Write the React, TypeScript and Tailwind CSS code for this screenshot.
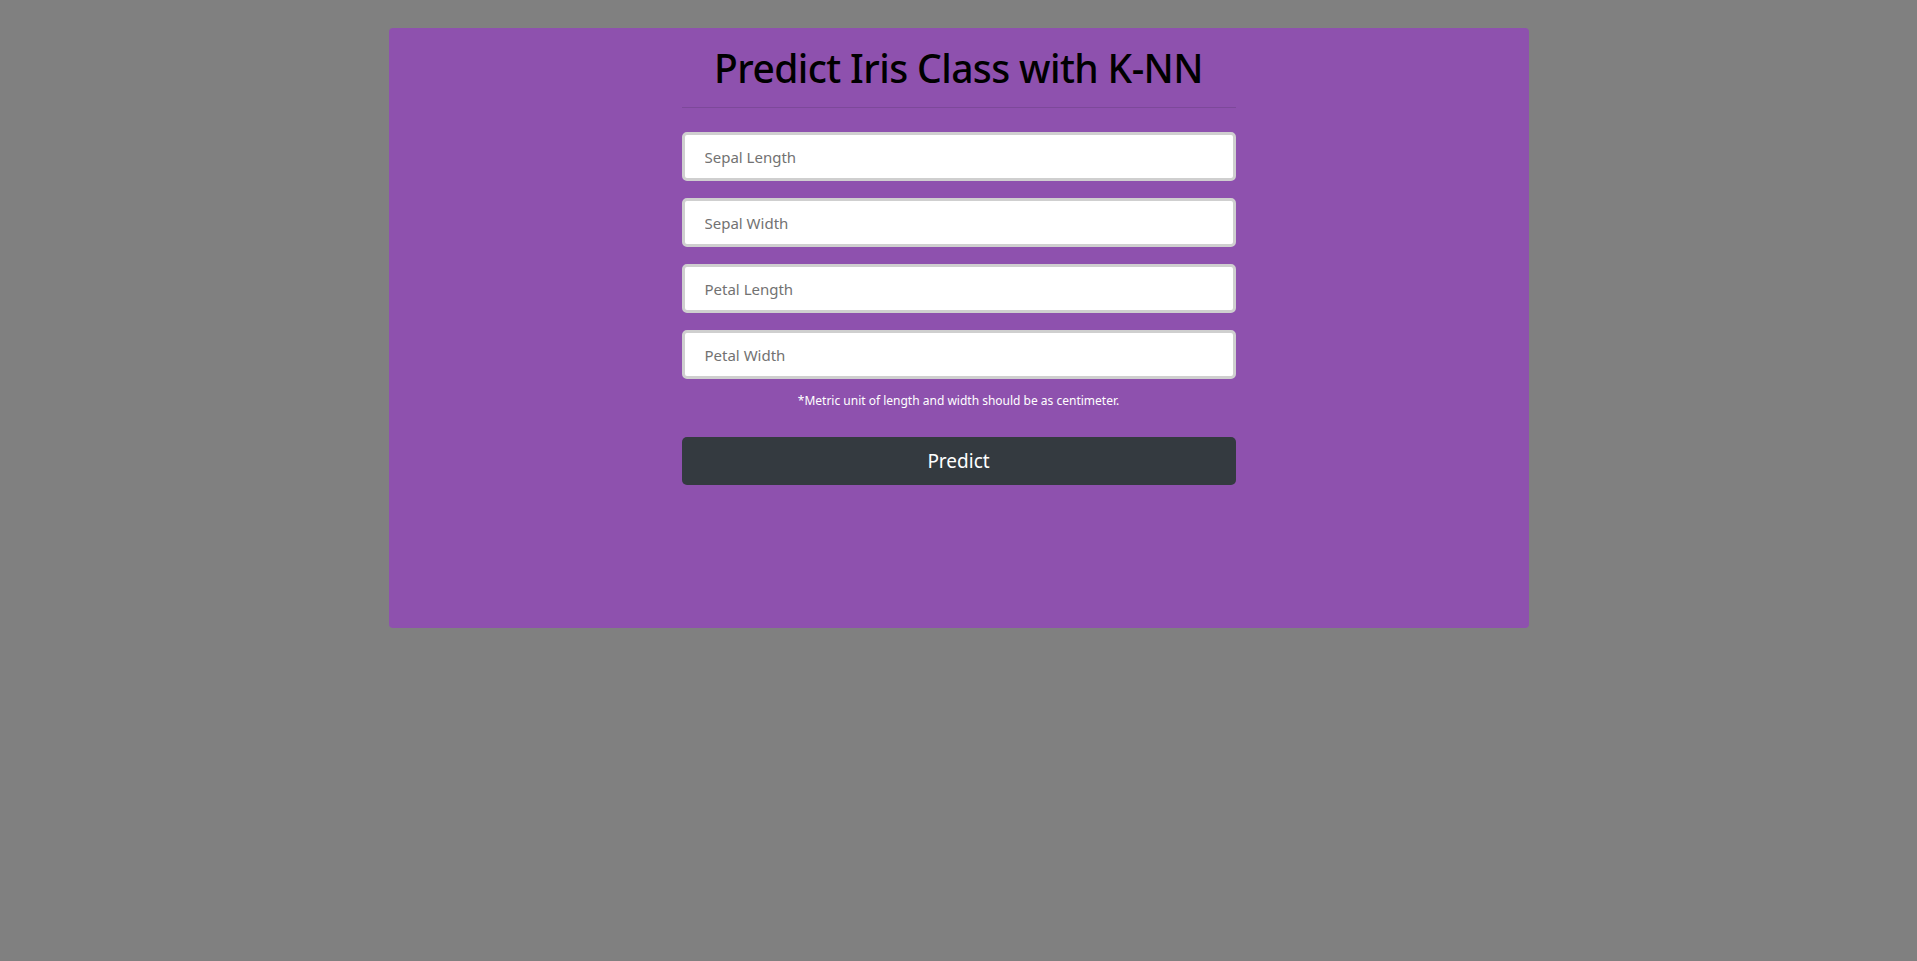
import { useState } from "react";

const fields = [
    { name: "sepal_length", label: "Sepal Length" },
    { name: "sepal_width", label: "Sepal Width" },
    { name: "petal_length", label: "Petal Length" },
    { name: "petal_width", label: "Petal Width" },
];

export default function App() {
    const [values, setValues] = useState<Record<string, string>>({});

    return (
        <div
            className="min-h-screen bg-[#808080] pt-[28px]"
            style={{ fontFamily: '"Noto Sans", "Open Sans", sans-serif' }}
        >
            <div className="mx-auto h-[600px] w-[1140px] rounded bg-[#8e51ae]">
                <div className="mx-auto flex w-[554px] flex-col pt-[16px]">
                    <h1 className="text-center text-[39px] leading-[48px] font-medium tracking-[-0.6px] text-black">
                        Predict Iris Class with K-NN
                    </h1>
                    <hr className="mt-[15px] mb-[24px] border-t border-[#7d489a]" />

                    {fields.map((f) => (
                        <input
                            key={f.name}
                            type="text"
                            name={f.name}
                            placeholder={f.label}
                            value={values[f.name] || ""}
                            onChange={(e) => setValues({ ...values, [f.name]: e.target.value })}
                            className="mb-[17px] h-[49px] w-full rounded-[5px] border-[3px] border-[#cfcfcf] bg-white px-[20px] text-[15px] text-gray-700 placeholder:text-[#727272] focus:outline-none"
                        />
                    ))}

                    <p className="-mt-[5px] text-center text-[12px] leading-[20px] text-white">
                        *Metric unit of length and width should be as centimeter.
                    </p>

                    <button className="mt-[26px] h-[48px] w-full rounded-[5px] bg-[#343a40] text-[19px] text-white">
                        Predict
                    </button>
                </div>
            </div>
        </div>
    );
}
